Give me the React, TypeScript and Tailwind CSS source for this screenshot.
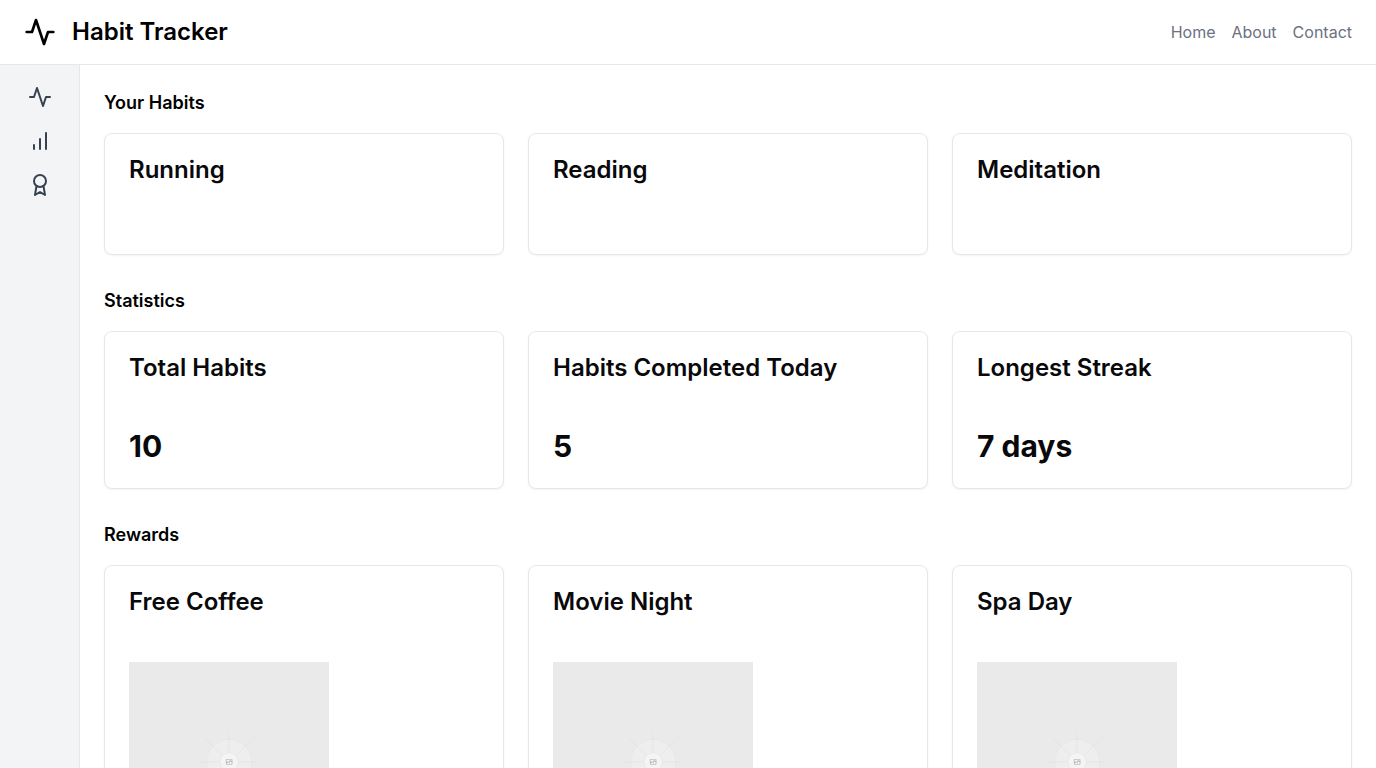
import type { ReactNode } from "react";

const habits = ["Running", "Reading", "Meditation"];

const statistics = [
  { title: "Total Habits", value: "10" },
  { title: "Habits Completed Today", value: "5" },
  { title: "Longest Streak", value: "7 days" },
];

const rewards = ["Free Coffee", "Movie Night", "Spa Day"];

const navLinks = ["Home", "About", "Contact"];

function Icon({ className, children }: { className: string; children: ReactNode }) {
  return (
    <svg
      aria-hidden="true"
      viewBox="0 0 24 24"
      fill="none"
      stroke="currentColor"
      strokeWidth="2"
      strokeLinecap="round"
      strokeLinejoin="round"
      className={className}
    >
      {children}
    </svg>
  );
}

function ActivityIcon({ className }: { className: string }) {
  return (
    <Icon className={className}>
      <path d="M22 12h-4l-3 9L9 3l-3 9H2" />
    </Icon>
  );
}

function BarChartIcon({ className }: { className: string }) {
  return (
    <Icon className={className}>
      <path d="M12 20V10" />
      <path d="M18 20V4" />
      <path d="M6 20v-4" />
    </Icon>
  );
}

function AwardIcon({ className }: { className: string }) {
  return (
    <Icon className={className}>
      <circle cx="12" cy="8" r="6" />
      <path d="M15.477 12.89 17 22l-5-3-5 3 1.523-9.11" />
    </Icon>
  );
}

const sideLinks = [
  { label: "Habits", href: "#habits", Glyph: ActivityIcon },
  { label: "Statistics", href: "#statistics", Glyph: BarChartIcon },
  { label: "Rewards", href: "#rewards", Glyph: AwardIcon },
];

function Section({ id, title, children }: { id: string; title: string; children: ReactNode }) {
  return (
    <section id={id}>
      <h2 className="mb-4 text-lg font-semibold">{title}</h2>
      <div className="grid grid-cols-1 gap-6 md:grid-cols-3">{children}</div>
    </section>
  );
}

function Card({ title, children }: { title: string; children?: ReactNode }) {
  return (
    <div className="rounded-lg border border-[#e5e7eb] bg-white text-[#09090b] shadow-[0_1px_2px_0_rgb(0_0_0_/_0.05)]">
      <h3 className="p-6 text-2xl leading-6 font-semibold">{title}</h3>
      <div className="p-6">{children}</div>
    </div>
  );
}

function FadeLine({ id, x1, y1, x2, y2 }: { id: string; x1: number; y1: number; x2: number; y2: number }) {
  return (
    <>
      <linearGradient id={id} x1={x1} y1={y1} x2={x2} y2={y2} gradientUnits="userSpaceOnUse">
        <stop stopColor="#c9c9c9" stopOpacity="0" />
        <stop offset=".208" stopColor="#c9c9c9" />
        <stop offset=".792" stopColor="#c9c9c9" />
        <stop offset="1" stopColor="#c9c9c9" stopOpacity="0" />
      </linearGradient>
      <path d={`M${x1} ${y1}L${x2} ${y2}`} stroke={`url(#${id})`} strokeWidth="2.418" />
    </>
  );
}

function PlaceholderImage({ id, label }: { id: string; label: string }) {
  return (
    <svg role="img" aria-label={label} viewBox="0 0 1200 1200" fill="none" className="block size-50">
      <rect width="1200" height="1200" rx="3" fill="#eaeaea" />
      <g opacity=".5">
        <g opacity=".5">
          <circle cx="600.709" cy="599.88" r="136.62" fill="#fafafa" />
          <circle cx="600.709" cy="599.88" r="135.41" stroke="#c9c9c9" strokeWidth="2.418" />
        </g>
        <FadeLine id={`${id}-rise`} x1={404.8} y1={795.7} x2={796.2} y2={404.3} />
        <FadeLine id={`${id}-fall`} x1={795.7} y1={796.6} x2={404.3} y2={405.2} />
        <FadeLine id={`${id}-flat`} x1={404.8} y1={598.671} x2={796.6} y2={598.67} />
        <FadeLine id={`${id}-tall`} x1={599.5} y1={795.7} x2={599.501} y2={404} />
        <circle cx="600.709" cy="599.88" r="56.82" fill="#fff" />
        <path
          fill="#666"
          fillRule="evenodd"
          clipRule="evenodd"
          d="M616.426 586.58h-31.434v16.176l3.553-3.554.531-.531h9.068l.074-.074 8.463-8.463h2.565l7.18 7.181V586.58Zm-15.715 14.654 3.698 3.699 1.283 1.282-2.565 2.565-1.282-1.283-5.2-5.199h-6.066l-5.514 5.514-.073.073v2.876a2.418 2.418 0 0 0 2.418 2.418h26.598a2.418 2.418 0 0 0 2.418-2.418v-8.317l-8.463-8.463-7.181 7.181-.071.072Zm-19.347 5.442v4.085a6.045 6.045 0 0 0 6.046 6.045h26.598a6.044 6.044 0 0 0 6.045-6.045v-7.108l1.356-1.355-1.282-1.283-.074-.073v-17.989h-38.689v23.43l-.146.146.146.147Z"
        />
        <circle cx="600.709" cy="599.88" r="55.61" stroke="#c9c9c9" strokeWidth="2.418" />
      </g>
    </svg>
  );
}

export default function App() {
  return (
    <div className="flex h-screen flex-col bg-white font-['Inter',sans-serif] text-black">
      <header className="flex shrink-0 items-center justify-between border-b border-[#e5e7eb] px-6 py-4">
        <div className="flex items-center gap-4">
          <ActivityIcon className="size-8" />
          <h1 className="text-2xl font-semibold">Habit Tracker</h1>
        </div>
        <nav className="flex gap-4">
          {navLinks.map((label) => (
            <a key={label} href="#" className="text-base text-[#6b7280]">
              {label}
            </a>
          ))}
        </nav>
      </header>
      <div className="flex min-h-0 flex-1">
        <aside className="w-20 shrink-0 border-r border-[#e5e7eb] bg-[#f3f4f6]">
          <nav className="flex flex-col items-center gap-5 py-5">
            {sideLinks.map(({ label, href, Glyph }) => (
              <a key={label} href={href} aria-label={label} className="text-[#374151]">
                <Glyph className="size-6" />
              </a>
            ))}
          </nav>
        </aside>
        <main className="flex flex-1 flex-col gap-8 overflow-y-auto p-6">
          <Section id="habits" title="Your Habits">
            {habits.map((title) => (
              <Card key={title} title={title} />
            ))}
          </Section>
          <Section id="statistics" title="Statistics">
            {statistics.map(({ title, value }) => (
              <Card key={title} title={title}>
                <p className="text-3xl font-bold">{value}</p>
              </Card>
            ))}
          </Section>
          <Section id="rewards" title="Rewards">
            {rewards.map((title, index) => (
              <Card key={title} title={title}>
                <PlaceholderImage id={`reward-${index}`} label={title} />
              </Card>
            ))}
          </Section>
        </main>
      </div>
    </div>
  );
}
